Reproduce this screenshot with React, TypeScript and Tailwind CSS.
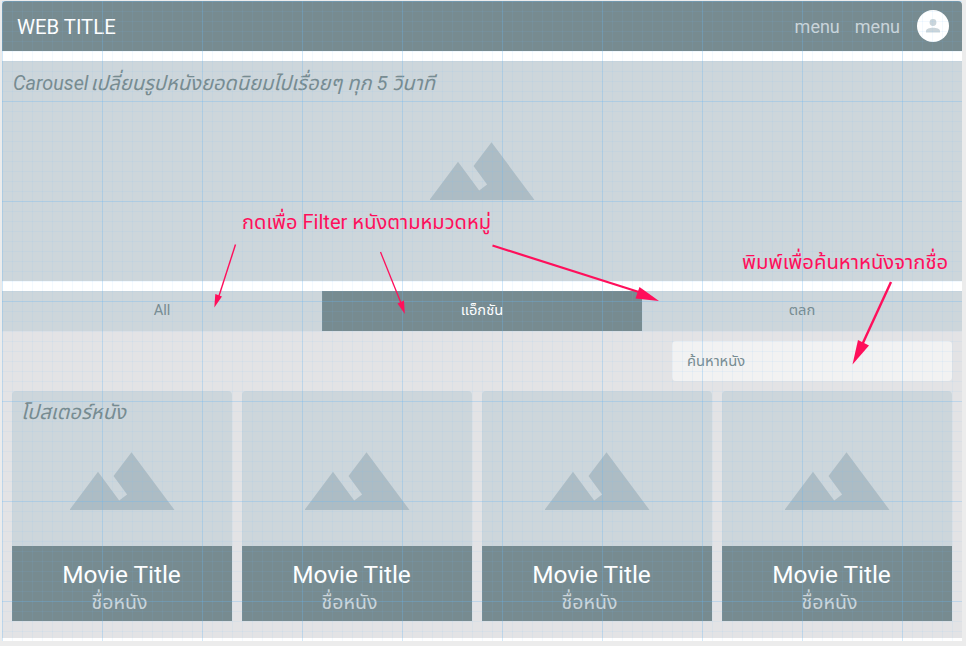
import React from "react";

const FONT = "font-[Roboto,'Noto_Sans_Thai','Noto_Sans',sans-serif]";

function Mountains() {
  return (
    <svg width="105" height="58" viewBox="0 0 105 58" className="block shrink-0" fill="#adbcc4">
      <path d="M-.5 58L28 19.8L49.2 48.4L57.1 42.6L43.5 24L61.5 0.3L104.5 58Z" />
    </svg>
  );
}

function Avatar() {
  return (
    <div className="flex h-8 w-8 items-center justify-center rounded-full bg-white">
      <svg width="14" height="14" viewBox="0 0 14 14" fill="#cbd5da">
        <circle cx="7" cy="3.5" r="3.4" />
        <path d="M0 13.6V12C0 9.8 3.5 8.7 7 8.7S14 9.8 14 12V13.6Z" />
      </svg>
    </div>
  );
}

function MovieCard({ label, className }: { label?: string; className: string }) {
  return (
    <article className={`h-[230px] ${className}`}>
      <div className="relative flex h-[155px] justify-center rounded-t bg-[#cdd6db] pt-[61px]">
        {label && (
          <span className="absolute left-[9px] top-[9px] whitespace-nowrap text-[20.2px] italic leading-6 text-[#778b90]">{label}</span>
        )}
        <Mountains />
      </div>
      <div className="h-[75px] bg-[#778b90]">
        <div className="flex w-[219px] flex-col items-center pt-[14px]">
          <h2 className="whitespace-nowrap text-[24.4px] leading-[30px] text-white">Movie Title</h2>
          <p className="mr-[4px] mt-px whitespace-nowrap text-[19.5px] leading-6 text-[#cbd5da]">ชื่อหนัง</p>
        </div>
      </div>
    </article>
  );
}

function GridOverlay() {
  return (
    <svg className="pointer-events-none absolute inset-0" width="960" height="640">
      <defs>
        <pattern id="minor" width="10" height="10" patternUnits="userSpaceOnUse">
          <path d="M0 .5H10M.5 0V10" stroke="#70b8ff" strokeOpacity=".09" />
        </pattern>
        <pattern id="major" width="100" height="100" patternUnits="userSpaceOnUse">
          <path d="M0 .5H100M.5 0V100" stroke="#64b4ec" strokeOpacity=".24" />
        </pattern>
      </defs>
      <rect width="960" height="640" fill="url(#minor)" />
      <rect width="960" height="640" fill="url(#major)" />
    </svg>
  );
}

function Annotations() {
  return (
    <div className="pointer-events-none absolute inset-0 text-[#ff0f5b]">
      <svg className="absolute inset-0" width="966" height="646" fill="currentColor" stroke="currentColor">
        <path d="M235.5 244.5L218 299" strokeWidth="1.4" />
        <path d="M214.3 307.5L215.3 294L222 296.5Z" stroke="none" />
        <path d="M380.5 252L401 303" strokeWidth="1.3" />
        <path d="M404.8 314L397.5 303.5L404 300.5Z" stroke="none" />
        <path d="M492.5 245.5L642 293" strokeWidth="2.2" />
        <path d="M659 301L635.5 298.5L639.5 287Z" stroke="none" />
        <path d="M891 282L862 345" strokeWidth="2.4" />
        <path d="M852.5 364.5L858 340L869 345.5Z" stroke="none" />
      </svg>
      <span className="absolute left-[242px] top-[210px] whitespace-nowrap text-[20.1px] leading-6">กดเพื่อ Filter หนังตามหมวดหมู่</span>
      <span className="absolute left-[742px] top-[250px] whitespace-nowrap text-[20.3px] leading-6">พิมพ์เพื่อค้นหาหนังจากชื่อ</span>
    </div>
  );
}

export default function App() {
  return (
    <div className={`relative h-[646px] w-[966px] overflow-hidden bg-[#ececec] pl-[2px] pt-px ${FONT}`}>
      <div className="relative h-[640px] w-[960px] bg-white">
        <header className="flex h-[50px] items-center justify-between rounded-t bg-[#778b90] pl-[15px] pr-[13px]">
          <h1 className="pt-[2px] text-[20.3px] leading-6 text-white">WEB TITLE</h1>
          <nav className="flex items-center text-[18px] leading-6 text-[#cbd5da]">
            <span className="mr-[15px] pt-[2px]">menu</span>
            <span className="mr-[17px] pt-[2px]">menu</span>
            <Avatar />
          </nav>
        </header>
        <section className="relative mt-[10px] flex h-[220px] justify-center bg-[#cdd6db] pt-[81px]">
          <p className="absolute left-[11px] top-[10px] whitespace-nowrap text-[20.1px] italic leading-6 text-[#778b90]">
            <span className="mr-[-3px] text-[19.8px]">Carousel</span> เปลี่ยนรูปหนังยอดนิยมไปเรื่อยๆ ทุก 5 วินาที
          </p>
          <Mountains />
        </section>
        <div className="mt-[10px] grid h-10 grid-cols-3 text-[14.7px] leading-[38px] text-[#778b90]">
          <div className="bg-[#cdd6db] text-center">All</div>
          <div className="bg-[#778b90] text-center text-white">แอ็กชัน</div>
          <div className="bg-[#cdd6db] text-center">ตลก</div>
        </div>
        <main className="h-[307px] bg-[#e3e3e5] px-[10px] pt-[10px]">
          <div className="ml-auto h-10 w-[280px] rounded-sm bg-[#f2f2f2] pl-[15px] text-[14.7px] leading-10 text-[#778b90]">ค้นหาหนัง</div>
          <div className="mt-[10px] flex gap-[10px]">
            <MovieCard className="w-[220px]" label="โปสเตอร์หนัง" />
            <MovieCard className="w-[230px]" />
            <MovieCard className="w-[230px]" />
            <MovieCard className="w-[230px]" />
          </div>
        </main>
        <GridOverlay />
      </div>
      <Annotations />
    </div>
  );
}
